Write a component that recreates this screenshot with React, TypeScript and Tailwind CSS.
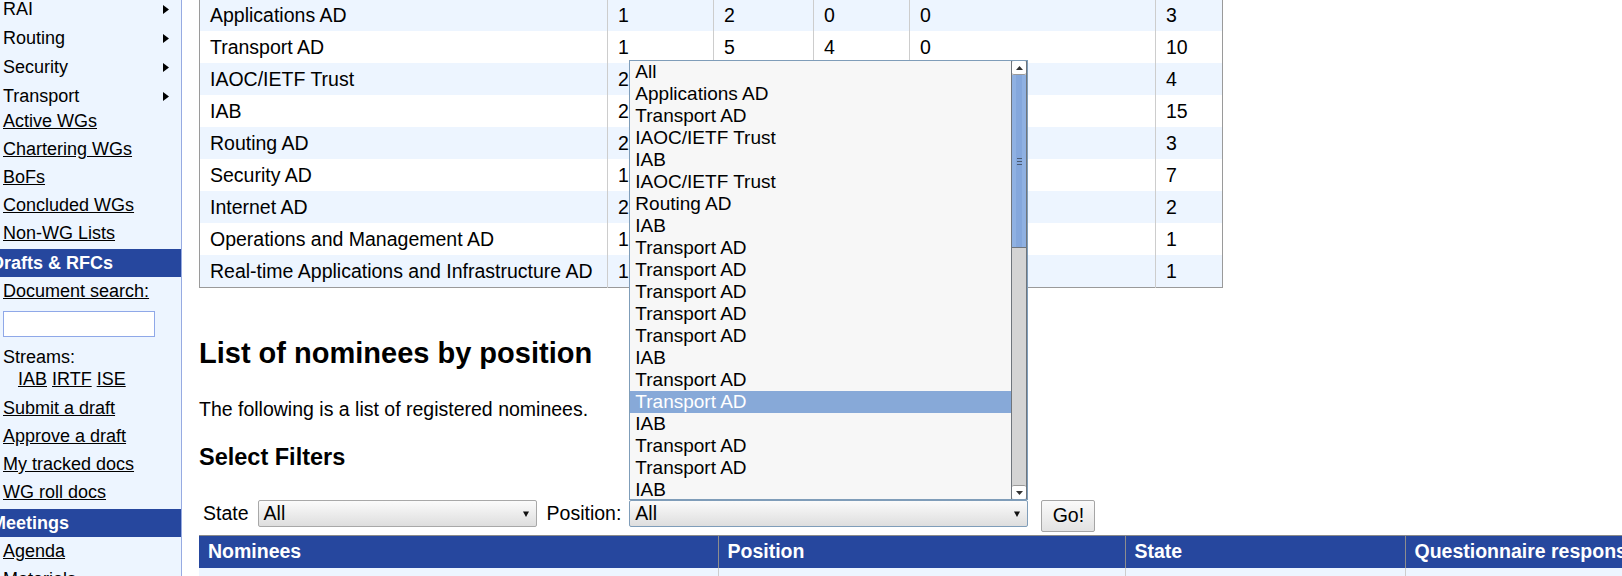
import React from 'react';

const menuItems = ['RAI', 'Routing', 'Security', 'Transport'];
const wgLinks = ['Active WGs', 'Chartering WGs', 'BoFs', 'Concluded WGs', 'Non-WG Lists'];
const draftLinks = ['Submit a draft', 'Approve a draft', 'My tracked docs', 'WG roll docs'];

const stats = [
  ['Applications AD', '1', '2', '0', '0', '3'],
  ['Transport AD', '1', '5', '4', '0', '10'],
  ['IAOC/IETF Trust', '2', '2', '0', '0', '4'],
  ['IAB', '2', '9', '4', '0', '15'],
  ['Routing AD', '2', '1', '0', '0', '3'],
  ['Security AD', '1', '4', '2', '0', '7'],
  ['Internet AD', '2', '0', '0', '0', '2'],
  ['Operations and Management AD', '1', '0', '0', '0', '1'],
  ['Real-time Applications and Infrastructure AD', '1', '0', '0', '0', '1'],
];

const options = [
  'All',
  'Applications AD',
  'Transport AD',
  'IAOC/IETF Trust',
  'IAB',
  'IAOC/IETF Trust',
  'Routing AD',
  'IAB',
  'Transport AD',
  'Transport AD',
  'Transport AD',
  'Transport AD',
  'Transport AD',
  'IAB',
  'Transport AD',
  'Transport AD',
  'IAB',
  'Transport AD',
  'Transport AD',
  'IAB',
];

function Arrow() {
  return (
    <svg width="6" height="9" viewBox="0 0 6 9">
      <path d="M0 0L6 4.5L0 9Z" fill="#000" />
    </svg>
  );
}

function DownCaret() {
  return (
    <svg width="6" height="6" viewBox="0 0 6 6">
      <path d="M0 0.5H6L3 6Z" fill="#111" />
    </svg>
  );
}

function Sidebar() {
  return (
    <div className="w-[182px] shrink-0 h-full bg-[#edf5ff] border-r border-[#97abe2] text-[18px] text-black overflow-hidden">
      <div className="-mt-[5px] mb-[-4px]">
        {menuItems.map((m) => (
          <div key={m} className="h-[29px] leading-[29px] pl-[3px] pr-[12px] flex items-center justify-between">
            <span>{m}</span>
            <Arrow />
          </div>
        ))}
      </div>
      {wgLinks.map((l) => (
        <div key={l} className="h-[28px] leading-[28px] pl-[3px]">
          <a className="underline">{l}</a>
        </div>
      ))}
      <div className="mt-[2px] h-[28px] leading-[28px] bg-[#26479e] text-white font-bold">
        <span className="-ml-[9px] whitespace-nowrap">Drafts &amp; RFCs</span>
      </div>
      <div className="h-[28px] leading-[28px] pl-[3px]">
        <a className="underline">Document search:</a>
      </div>
      <div className="mt-[6px] ml-[3px] w-[152px] h-[26px] bg-white border border-[#8fa8e8]" />
      <div className="mt-[9px] pl-[3px] leading-[22px]">
        <div>Streams:</div>
        <div className="pl-[15px] flex gap-[5px]">
          <a className="underline">IAB</a>
          <a className="underline">IRTF</a>
          <a className="underline">ISE</a>
        </div>
      </div>
      <div className="mt-[4px]">
        {draftLinks.map((l) => (
          <div key={l} className="h-[28px] leading-[28px] pl-[3px]">
            <a className="underline">{l}</a>
          </div>
        ))}
      </div>
      <div className="mt-[3px] h-[28px] leading-[28px] bg-[#26479e] text-white font-bold">
        <span className="-ml-[9px] whitespace-nowrap">Meetings</span>
      </div>
      <div className="h-[28px] leading-[28px] pl-[3px]">
        <a className="underline">Agenda</a>
      </div>
      <div className="h-[28px] leading-[28px] pl-[3px]">
        <a className="underline">Materials</a>
      </div>
    </div>
  );
}

function StatsTable() {
  const widths = ['w-[408px]', 'w-[106px]', 'w-[100px]', 'w-[96px]', 'w-[246px]', 'w-[67px]'];
  return (
    <table className="-mt-[2px] table-fixed w-[1023px] border-collapse border border-[#9a9a9a] text-[19.5px]">
      <colgroup>
        {widths.map((w, i) => (
          <col key={i} className={w} />
        ))}
      </colgroup>
      <tbody>
        {stats.map((row, r) => (
          <tr key={r} className={r % 2 === 0 ? 'bg-[#edf5ff]' : 'bg-white'}>
            {row.map((c, i) => (
              <td
                key={i}
                className={
                  'h-[32px] p-0 pl-[10px] leading-[32px] whitespace-nowrap ' +
                  (i > 0 ? 'border-l border-[#cdcdcd]' : '')
                }
              >
                {c}
              </td>
            ))}
          </tr>
        ))}
      </tbody>
    </table>
  );
}

function Scrollbar() {
  return (
    <div className="w-[16px] h-full flex flex-col border-x border-[#6f757c] bg-[#d4d4d4]">
      <div className="h-[14px] bg-white rounded-[2px] border-b border-[#9a9a9a] flex items-center justify-center">
        <svg width="7" height="4" viewBox="0 0 7 4">
          <path d="M0 4L3.5 0L7 4Z" fill="#333" />
        </svg>
      </div>
      <div className="h-[173px] bg-[#8fb1e2] flex items-center justify-center border-b border-[#6f757c]">
        <div className="w-[6px] h-full bg-[#84a7dc] flex flex-col items-center justify-center gap-[2px]">
          <div className="w-[5px] h-px bg-[#4b5b72]" />
          <div className="w-[5px] h-px bg-[#4b5b72]" />
          <div className="w-[5px] h-px bg-[#4b5b72]" />
        </div>
      </div>
      <div className="flex-1" />
      <div className="h-[14px] bg-white rounded-[2px] border-t border-[#9a9a9a] flex items-center justify-center">
        <svg width="7" height="4" viewBox="0 0 7 4">
          <path d="M0 0L3.5 4L7 0Z" fill="#333" />
        </svg>
      </div>
    </div>
  );
}

function PositionList() {
  return (
    <div className="absolute left-0 bottom-full w-[399px] h-[440px] border border-[#7f9db9] bg-[#f7f7f7] flex text-[19px] z-10">
      <div className="flex-1">
        {options.map((o, i) => (
          <div
            key={i}
            className={
              'h-[22px] leading-[22px] pl-[5px] whitespace-nowrap ' +
              (i === 15 ? 'bg-[#87a9d8] text-white' : 'text-black')
            }
          >
            {o}
          </div>
        ))}
      </div>
      <Scrollbar />
    </div>
  );
}

function Filters() {
  return (
    <div className="mt-[29px] h-[32px] flex items-start text-[19.5px]">
      <span className="ml-[4px] leading-[27px]">State</span>
      <div className="ml-[9px] w-[279px] h-[27px] border border-[#a8a8a8] rounded-[2px] bg-gradient-to-b from-[#fbfbfb] to-[#dedede] flex items-center justify-between pl-[5px] pr-[7px]">
        <span>All</span>
        <DownCaret />
      </div>
      <span className="ml-[10px] leading-[27px]">Position:</span>
      <div className="ml-[8px] relative">
        <PositionList />
        <div className="w-[399px] h-[27px] border border-[#7f9db9] rounded-[2px] bg-gradient-to-b from-[#fbfbfb] to-[#dedede] flex items-center justify-between pl-[5px] pr-[7px]">
          <span>All</span>
          <DownCaret />
        </div>
      </div>
      <button className="ml-[13px] w-[54px] h-[32px] border border-[#a5a5a5] rounded-[2px] bg-gradient-to-b from-[#fafafa] to-[#e2e2e2] text-[19.5px] text-black">
        Go!
      </button>
    </div>
  );
}

function NomineesTable() {
  const head = ['Nominees', 'Position', 'State', 'Questionnaire response'];
  const widths = ['w-[519px]', 'w-[407px]', 'w-[280px]', 'w-[400px]'];
  return (
    <table className="mt-[3px] table-fixed w-[1606px] border-collapse border-t border-[#8a8a8a] text-[19.5px]">
      <colgroup>
        {widths.map((w, i) => (
          <col key={i} className={w} />
        ))}
      </colgroup>
      <thead>
        <tr className="bg-[#26479e] text-white">
          {head.map((h, i) => (
            <th
              key={h}
              className={
                'h-[32px] p-0 pl-[9px] text-left font-bold whitespace-nowrap ' +
                (i > 0 ? 'border-l border-[#8d8d8d]' : '')
              }
            >
              {h}
            </th>
          ))}
        </tr>
      </thead>
      <tbody>
        <tr className="bg-[#edf5ff]">
          {head.map((h, i) => (
            <td key={h} className={'h-[32px] p-0 ' + (i > 0 ? 'border-l border-[#cdcdcd]' : '')} />
          ))}
        </tr>
      </tbody>
    </table>
  );
}

export default function App() {
  return (
    <div className="w-full h-[576px] overflow-hidden flex bg-white text-black font-['Liberation_Sans',Arial,sans-serif]">
      <Sidebar />
      <div className="flex-1 min-w-0 overflow-hidden pl-[17px]">
        <StatsTable />
        <h1 className="mt-[48px] text-[29px] leading-[34px] font-bold">List of nominees by position</h1>
        <p className="mt-[27px] text-[19.5px] leading-[24px]">The following is a list of registered nominees.</p>
        <h2 className="mt-[22px] text-[23.5px] leading-[28px] font-bold">Select Filters</h2>
        <Filters />
        <NomineesTable />
      </div>
    </div>
  );
}
